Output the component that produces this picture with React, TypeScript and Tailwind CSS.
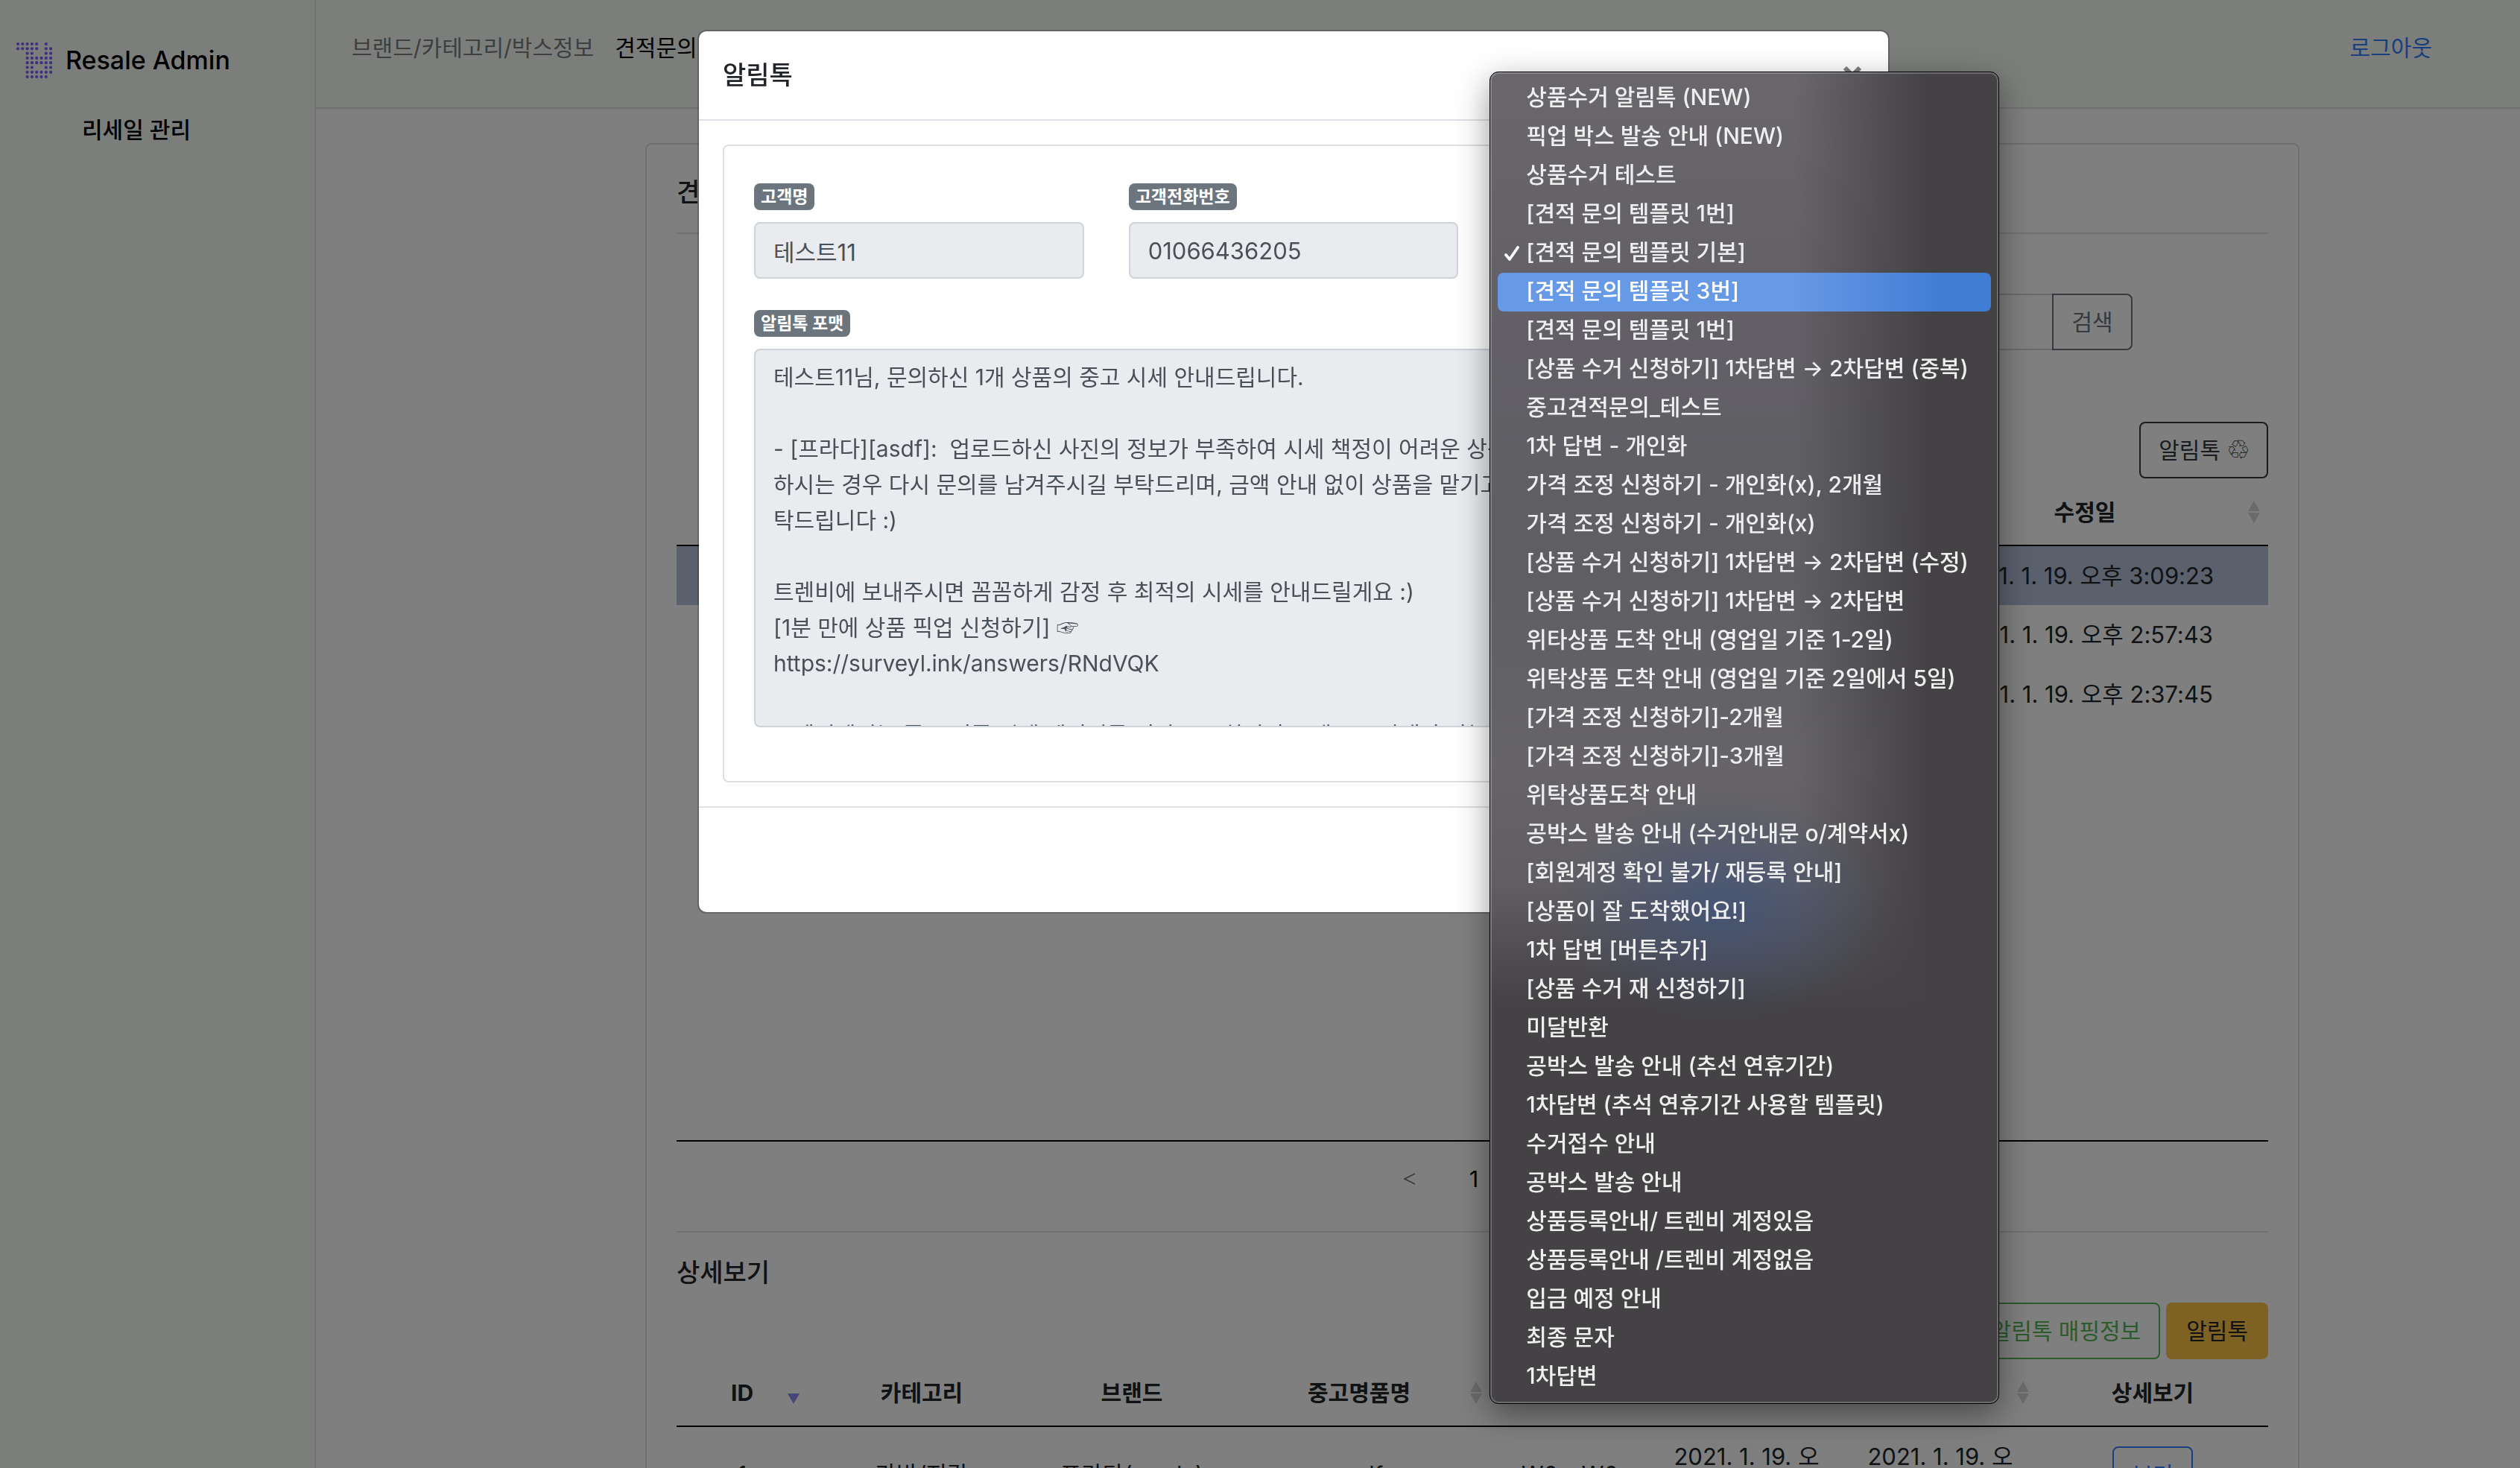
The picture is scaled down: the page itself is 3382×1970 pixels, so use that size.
import React from 'react';

const menuItems = [
  '상품수거 알림톡 (NEW)',
  '픽업 박스 발송 안내 (NEW)',
  '상품수거 테스트',
  '[견적 문의 템플릿 1번]',
  '[견적 문의 템플릿 기본]',
  '[견적 문의 템플릿 3번]',
  '[견적 문의 템플릿 1번]',
  '[상품 수거 신청하기] 1차답변 → 2차답변 (중복)',
  '중고견적문의_테스트',
  '1차 답변 - 개인화',
  '가격 조정 신청하기 - 개인화(x), 2개월',
  '가격 조정 신청하기 - 개인화(x)',
  '[상품 수거 신청하기] 1차답변 → 2차답변 (수정)',
  '[상품 수거 신청하기] 1차답변 → 2차답변',
  '위타상품 도착 안내 (영업일 기준 1-2일)',
  '위탁상품 도착 안내 (영업일 기준 2일에서 5일)',
  '[가격 조정 신청하기]-2개월',
  '[가격 조정 신청하기]-3개월',
  '위탁상품도착 안내',
  '공박스 발송 안내 (수거안내문 o/계약서x)',
  '[회원계정 확인 불가/ 재등록 안내]',
  '[상품이 잘 도착했어요!]',
  '1차 답변 [버튼추가]',
  '[상품 수거 재 신청하기]',
  '미달반환',
  '공박스 발송 안내 (추선 연휴기간)',
  '1차답변 (추석 연휴기간 사용할 템플릿)',
  '수거접수 안내',
  '공박스 발송 안내',
  '상품등록안내/ 트렌비 계정있음',
  '상품등록안내 /트렌비 계정없음',
  '입금 예정 안내',
  '최종 문자',
  '1차답변',
];
const CHECKED = 4;
const ACTIVE = 5;

const message = [
  '테스트11님, 문의하신 1개 상품의 중고 시세 안내드립니다.',
  '',
  '- [프라다][asdf]:  업로드하신 사진의 정보가 부족하여 시세 책정이 어려운 상품',
  '하시는 경우 다시 문의를 남겨주시길 부탁드리며, 금액 안내 없이 상품을 맡기고',
  '탁드립니다 :)',
  '',
  '트렌비에 보내주시면 꼼꼼하게 감정 후 최적의 시세를 안내드릴게요 :)',
  '[1분 만에 상품 픽업 신청하기] ☞',
  'https://surveyl.ink/answers/RNdVQK',
  '',
  '트렌비에서는 중고 명품 시세 데이터를 기반으로 최적의 금액으로 판매가 가능합니다.',
].join('\n');

const dotRows = ['11111010', '11111011', '00110011', '00111111', '00111111', '00110011', '00111111', '00111110'];

function Logo() {
  return (
    <svg viewBox="0 0 50 50" className="size-[50px] fill-[#7a60ff]" aria-hidden="true">
      {dotRows.map((row, y) =>
        row.split('').map((on, x) =>
          on === '1' ? <circle key={`${x}-${y}`} cx={4 + x * 6.3} cy={3 + y * 6.3} r={2.1} /> : null,
        ),
      )}
    </svg>
  );
}

function SortIcon({ active = false }: { active?: boolean }) {
  return (
    <svg viewBox="0 0 16 30" className="absolute right-[11px] top-1/2 h-[30px] w-4 -translate-y-1/2" aria-hidden="true">
      {active ? (
        <path d="M0 16h16L8 30z" className="fill-[#8c8cf0]" />
      ) : (
        <path d="M8 0l8 14H0zM0 16h16L8 30z" className="fill-[#d6d6d6]" />
      )}
    </svg>
  );
}

function Head({ label, sort }: { label: string; sort?: 'idle' | 'desc' }) {
  return (
    <th scope="col" className="relative h-[90px] p-0 text-center font-bold">
      {label}
      {sort && <SortIcon active={sort === 'desc'} />}
    </th>
  );
}

function Badge({ htmlFor, children }: { htmlFor: string; children: string }) {
  return (
    <label htmlFor={htmlFor} className="flex h-9 w-fit items-center rounded-lg bg-[#6c757d] px-[9px] text-[23px] font-bold text-white">
      {children}
    </label>
  );
}

function TemplateMenu() {
  return (
    <ul
      role="listbox"
      aria-label="템플릿"
      className="absolute -left-[18px] -top-[202px] w-[684px] rounded-xl border border-black bg-[#444245] bg-[radial-gradient(ellipse_220px_150px_at_310px_1120px,rgba(64,84,124,0.75),transparent),linear-gradient(to_right,transparent_60%,#444245_86%),linear-gradient(to_bottom,#69676b_0,#626066_20%,#5f5e63_38%,#666468_52%,#605e62_61%,#444245_70%)] px-2.5 py-[9px] font-medium text-[#efefef] shadow-[inset_0_0_0_2px_rgba(255,255,255,0.22),0_14px_44px_rgba(0,0,0,0.42)]"
    >
      {menuItems.map((item, i) => (
        <li
          key={i}
          role="option"
          aria-selected={i === CHECKED}
          className={
            i === ACTIVE
              ? 'flex h-[52px] items-center whitespace-pre rounded-lg bg-linear-to-r from-[#6699e6] from-60% to-[#427dd4] to-90% pb-1 text-white'
              : 'flex h-[52px] items-center whitespace-pre pb-1'
          }
        >
          <span className="flex w-[38px] justify-center pt-1">
            {i === CHECKED && (
              <svg viewBox="0 0 20 20" className="size-5 fill-none stroke-white" aria-label="선택됨">
                <path d="M2 12l5 6L18 2" strokeWidth={3.8} strokeLinecap="round" strokeLinejoin="round" />
              </svg>
            )}
          </span>
          {item}
        </li>
      ))}
    </ul>
  );
}

function Modal() {
  const field = 'block h-[76px] w-full rounded-lg border-2 border-[#ced4da] bg-[#e9ebef] px-6 text-[31px] text-[#495057]';
  return (
    <div className="fixed inset-0 flex items-start justify-center bg-black/50 pl-[90px] pt-10">
      <div role="dialog" aria-modal="true" aria-labelledby="modal-title" className="w-[1600px] rounded-xl border-2 border-black/20 bg-white bg-clip-padding">
        <div className="flex h-[120px] items-center justify-between border-b-2 border-[#dee2e6] px-8">
          <h2 id="modal-title" className="text-[34px] font-medium text-[#212529]">알림톡</h2>
          <button type="button" aria-label="닫기" className="p-1">
            <svg viewBox="0 0 24 24" className="size-6 fill-none stroke-[#7f7f7f]">
              <path d="M2 2l20 20M22 2L2 22" strokeWidth={6} />
            </svg>
          </button>
        </div>
        <div className="p-8">
          <div className="rounded-lg border-2 border-[#dfdfdf] px-10 pb-[72px] pt-[50px]">
            <div className="grid grid-cols-3 gap-[60px]">
              <div className="flex flex-col gap-4">
                <Badge htmlFor="name">고객명</Badge>
                <input id="name" readOnly value="테스트11" className={field} />
              </div>
              <div className="flex flex-col gap-4">
                <Badge htmlFor="phone">고객전화번호</Badge>
                <input id="phone" readOnly value="01066436205" className={field} />
              </div>
              <div className="flex flex-col gap-4">
                <Badge htmlFor="template">템플릿</Badge>
                <div className="relative">
                  <select id="template" defaultValue={CHECKED} className={field}>
                    {menuItems.map((item, i) => (
                      <option key={i} value={i}>{item}</option>
                    ))}
                  </select>
                  <TemplateMenu />
                </div>
              </div>
            </div>
            <div className="mt-[42px] flex flex-col gap-4">
              <Badge htmlFor="format">알림톡 포맷</Badge>
              <textarea
                id="format"
                readOnly
                value={message}
                className="block h-[508px] w-full resize-none overflow-hidden whitespace-pre rounded-lg border-2 border-[#ced4da] bg-[#e9ebef] px-6 py-3 leading-[48px] text-[#495057]"
              />
            </div>
          </div>
        </div>
        <div className="h-[142px] border-t-2 border-[#dee2e6]" />
      </div>
    </div>
  );
}

const updates = ['2021. 1. 19. 오후 3:09:23', '2021. 1. 19. 오후 2:57:43', '2021. 1. 19. 오후 2:37:45'];

export default function App() {
  return (
    <div className="flex h-screen overflow-hidden bg-white font-[Inter,'Noto_Sans_CJK_KR',sans-serif] text-[30px] leading-[48px] text-[#212529]">
      <aside className="w-[424px] shrink-0 border-r-2 border-[#e2e5e3] bg-[#f8fcf9]">
        <div className="flex h-[162px] items-center gap-[18px] pl-5">
          <Logo />
          <span className="text-[34px] font-medium text-black">Resale Admin</span>
        </div>
        <a href="#resale" className="-mt-3 block pl-[110px] font-medium text-black">리세일 관리</a>
      </aside>
      <div className="flex min-w-0 flex-1 flex-col">
        <header className="flex h-[146px] shrink-0 items-start justify-between border-b-2 border-[#e0e2e1] bg-[#f8fcf9] pl-12 pr-[118px] pt-10">
          <nav className="flex gap-7">
            <a href="#brand" className="text-[#7c7e7c]">브랜드/카테고리/박스정보</a>
            <a href="#quote" className="text-black">견적문의</a>
          </nav>
          <a href="#logout" className="text-[#347eff]">로그아웃</a>
        </header>
        <main className="flex-1 pl-[442px] pr-[296px] pt-[46px]">
          <section className="rounded-lg border-2 border-[#dfdfdf] px-10 pt-10">
            <h1 className="text-[34px] font-medium">견적문의</h1>
            <hr className="mt-[30px] border-t-2 border-[#e2e2e2]" />
            <form className="mt-20 flex pl-[1200px] pr-[182px]">
              <input aria-label="검색어" className="h-[76px] min-w-0 flex-1 rounded-l-lg border-2 border-r-0 border-[#ced4da]" />
              <button type="button" className="h-[76px] w-[108px] rounded-r-lg border-2 border-[#6c757d] text-[#6c757d]">검색</button>
            </form>
            <div className="mt-24 flex justify-end">
              <button type="button" className="flex h-[76px] items-center gap-2 rounded-lg border-2 border-[#343a40] px-6 text-[#343a40]">
                알림톡 <span className="w-[30px] text-center font-['DejaVu_Sans'] text-[36px] leading-none">♲</span>
              </button>
            </div>
            <div className="h-[890px] border-b-2 border-black">
              <table className="w-full table-fixed border-collapse">
                <colgroup>
                  <col />
                  <col className="w-[492px]" />
                </colgroup>
                <thead>
                  <tr className="border-b-2 border-black">
                    <Head label="ID" />
                    <Head label="수정일" sort="idle" />
                  </tr>
                </thead>
                <tbody className="text-[31px]">
                  {updates.map((date, i) => (
                    <tr key={date} className={i === 0 ? 'h-20 bg-[#b6c0da]' : 'h-20'}>
                      <td />
                      <td className="p-0 text-center">{date}</td>
                    </tr>
                  ))}
                </tbody>
              </table>
            </div>
            <div className="flex h-[120px] items-center justify-center gap-[72px] pb-5 pl-1">
              <button type="button" aria-label="이전">
                <svg viewBox="0 0 16 16" className="size-4 fill-none stroke-[#6c757d]">
                  <path d="M15 1L1 8l14 7" strokeWidth={1.6} />
                </svg>
              </button>
              <span className="text-black">1</span>
              <button type="button" aria-label="다음">
                <svg viewBox="0 0 16 16" className="size-4 fill-none stroke-[#6c757d]">
                  <path d="M1 1l14 7L1 15" strokeWidth={1.6} />
                </svg>
              </button>
            </div>
            <hr className="border-t-2 border-[#e2e2e2]" />
            <h2 className="mt-[30px] text-[34px] font-medium">상세보기</h2>
            <div className="mt-4 flex justify-end gap-2">
              <button type="button" className="h-[76px] rounded-lg border-2 border-[#56b456] px-6 text-[#56b456]">알림톡 매핑정보</button>
              <button type="button" className="h-[76px] rounded-lg bg-[#fac448] px-[27px]">알림톡</button>
            </div>
            <table className="w-full table-fixed border-collapse">
              <colgroup>
                <col className="w-[176px]" />
                <col className="w-[306px]" />
                <col className="w-[258px]" />
                <col className="w-[352px]" />
                <col />
                <col className="w-[260px]" />
                <col className="w-[260px]" />
                <col className="w-[310px]" />
              </colgroup>
              <thead>
                <tr className="border-b-2 border-black">
                  <Head label="ID" sort="desc" />
                  <Head label="카테고리" />
                  <Head label="브랜드" />
                  <Head label="중고명품명" sort="idle" />
                  <Head label="가격" sort="idle" />
                  <Head label="등록일" sort="idle" />
                  <Head label="수정일" sort="idle" />
                  <Head label="상세보기" />
                </tr>
              </thead>
              <tbody className="text-[31px]">
                <tr className="h-32 text-center">
                  <td>1</td>
                  <td>가방/지갑</td>
                  <td>프라다(prada)</td>
                  <td>asdf</td>
                  <td>₩0 - ₩0</td>
                  <td className="whitespace-nowrap">2021. 1. 19. 오<br />후 3:09:23</td>
                  <td className="whitespace-nowrap">2021. 1. 19. 오<br />후 3:09:23</td>
                  <td>
                    <button type="button" className="h-[76px] rounded-lg border-2 border-[#347eff] px-6 text-[30px] text-[#347eff]">보기</button>
                  </td>
                </tr>
              </tbody>
            </table>
          </section>
        </main>
      </div>
      <Modal />
    </div>
  );
}
